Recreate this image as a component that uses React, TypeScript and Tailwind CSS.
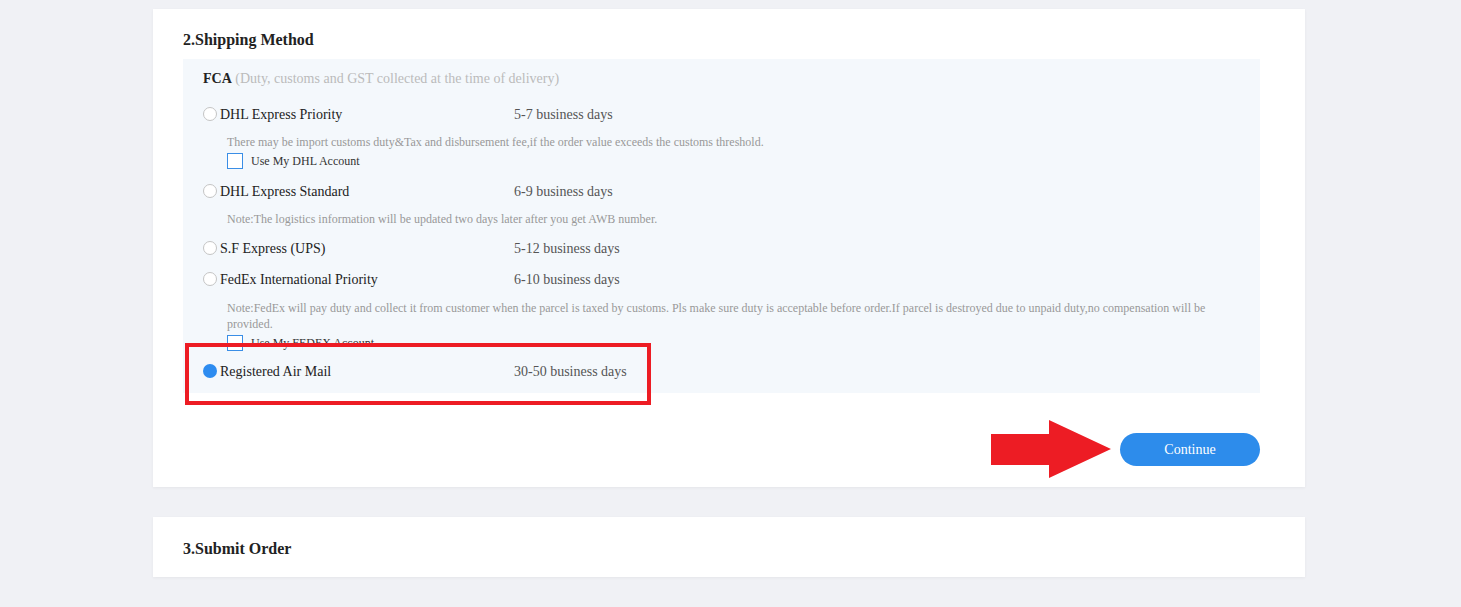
import React from "react"

type Method = {
  name: string
  days: string
  checked?: boolean
}

const Radio = ({ checked }: { checked?: boolean }) =>
  checked ? (
    <span className="inline-block w-[14px] h-[14px] rounded-full bg-[#2d8cf0] shrink-0" />
  ) : (
    <span className="inline-block w-[14px] h-[14px] rounded-full border border-[#c4c4c4] bg-white shrink-0" />
  )

const MethodRow = ({ m, className }: { m: Method; className?: string }) => (
  <div className={"flex items-center h-[20px] " + (className ?? "")}>
    <div className="flex items-center gap-[3px] w-[311px]">
      <Radio checked={m.checked} />
      <span className="text-[14px] text-[#222]">{m.name}</span>
    </div>
    <span className="text-[14px] text-[#555]">{m.days}</span>
  </div>
)

const Note = ({ children, className }: { children: React.ReactNode; className?: string }) => (
  <p className={"pl-[24px] text-[12px] leading-[16px] text-[#999] " + (className ?? "")}>{children}</p>
)

const Check = ({ label, className }: { label: string; className?: string }) => (
  <div className={"flex items-center gap-[8px] pl-[24px] h-[16px] " + (className ?? "")}>
    <span className="inline-block w-[16px] h-[16px] border border-[#3a8ee6] bg-white" />
    <span className="text-[12px] text-[#333]">{label}</span>
  </div>
)

const Arrow = () => (
  <svg width="121" height="59" viewBox="0 0 121 59">
    <path d="M0 14 H58 V0 L120 29 L58 58 V45 H0 Z" fill="#ed1c24" />
  </svg>
)

const App: React.FC = () => {
  return (
    <div className="w-full min-h-screen bg-[#f0f1f5] pt-[9px] pb-[30px] font-['Liberation_Serif',serif]">
      <div className="relative ml-[153px] w-[1152px] bg-white pt-[30px] pl-[30px] pr-[45px] pb-[21px] shadow-[0_1px_3px_rgba(0,0,0,0.05)]">
        <h2 className="text-[16px] leading-[20px] font-bold text-[#222] -mt-[9px]">2.Shipping Method</h2>
        <div className="mt-[9px] bg-[#f4f8fc] pt-[10px] pb-[12px] pl-[20px] pr-[20px]">
          <div className="h-[20px] text-[14px] leading-[20px]">
            <span className="font-bold text-[#222]">FCA</span>
            <span className="text-[#bbb]"> (Duty, customs and GST collected at the time of delivery)</span>
          </div>
          <MethodRow className="mt-[15px]" m={{ name: "DHL Express Priority", days: "5-7 business days" }} />
          <Note className="mt-[10px]">
            There may be import customs duty&amp;Tax and disbursement fee,if the order value exceeds the customs threshold.
          </Note>
          <Check className="mt-[3px]" label="Use My DHL Account" />
          <MethodRow className="mt-[12px]" m={{ name: "DHL Express Standard", days: "6-9 business days" }} />
          <Note className="mt-[10px]">
            Note:The logistics information will be updated two days later after you get AWB number.
          </Note>
          <MethodRow className="mt-[11px]" m={{ name: "S.F Express (UPS)", days: "5-12 business days" }} />
          <MethodRow className="mt-[11px]" m={{ name: "FedEx International Priority", days: "6-10 business days" }} />
          <Note className="mt-[11px]">
            Note:FedEx will pay duty and collect it from customer when the parcel is taxed by customs. Pls make sure duty
            is acceptable before order.If parcel is destroyed due to unpaid duty,no compensation will be provided.
          </Note>
          <Check className="mt-[3px]" label="Use My FEDEX Account" />
          <MethodRow className="mt-[10px]" m={{ name: "Registered Air Mail", days: "30-50 business days", checked: true }} />
        </div>
        <div className="flex justify-end mt-[40px]">
          <div className="relative">
            <div className="absolute right-[148px] -top-[13px]">
              <Arrow />
            </div>
            <button className="w-[140px] h-[33px] rounded-full bg-[#2d8ceb] text-white text-[14px]">Continue</button>
          </div>
        </div>
        <div className="absolute left-[32px] top-[334px] w-[466px] h-[62px] border-[4px] border-[#ed1c24]" />
      </div>
      <div className="mt-[30px] ml-[153px] w-[1152px] h-[60px] bg-white pl-[30px] pt-[22px] shadow-[0_1px_3px_rgba(0,0,0,0.05)]">
        <h2 className="text-[16px] leading-[20px] font-bold text-[#222]">3.Submit Order</h2>
      </div>
    </div>
  )
}

export default App
